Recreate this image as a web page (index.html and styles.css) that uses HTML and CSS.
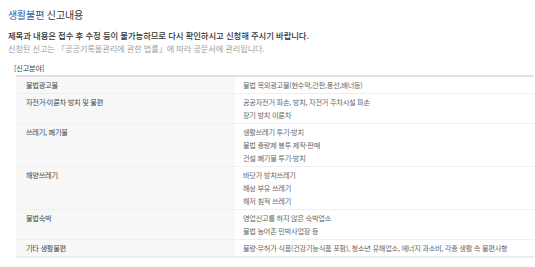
FILE: index.html
```html
<!DOCTYPE html>
<html lang="ko">
<head>
<meta charset="utf-8">
<link rel="stylesheet" href="styles.css">
</head>
<body>
<div class="page">
  <h2 class="title"><span class="accent">생활불편</span> 신고내용</h2>
  <p class="notice">제목과 내용은 접수 후 수정 등이 불가능하므로 다시 확인하시고 신청해 주시기 바랍니다.</p>
  <p class="sub">신청된 신고는 「공공기록물관리에 관한 법률」에 따라 공문서에 관리됩니다.</p>
  <div class="label">[신고분야]</div>
  <table class="fields">
    <tr><th>불법광고물</th><td>불법 옥외광고물(현수막,간판,풍선,배너등)</td></tr>
    <tr><th>자전거·이륜차 방치 및 불편</th><td>공공자전거 파손, 방치, 자전거 주차시설 파손<br>장기 방치 이륜차</td></tr>
    <tr><th>쓰레기, 폐기물</th><td>생활쓰레기 투기·방치<br>불법 종량제 봉투 제작·판매<br>건설 폐기물 투기·방치</td></tr>
    <tr><th>해양쓰레기</th><td>바닷가 방치쓰레기<br>해상 부유 쓰레기<br>해저 침적 쓰레기</td></tr>
    <tr><th>불법숙박</th><td>영업신고를 하지 않은 숙박업소<br>불법 농어촌 민박사업장 등</td></tr>
    <tr><th>기타 생활불편</th><td>불량·무허가 식품(건강기능식품 포함), 청소년 유해업소, 에너지 과소비, 각종 생활 속 불편사항</td></tr>
  </table>
</div>
</body>
</html>
```
FILE: styles.css
```css
html, body {
  margin: 0;
  padding: 0;
  background: #fff;
}
body {
  font-family: "Noto Sans CJK KR", "Noto Sans", sans-serif;
  color: #333;
}
.page {
  padding: 8px 1px 0 8px;
}
.title {
  margin: 0;
  font-size: 10px;
  line-height: 14px;
  font-weight: 400;
  letter-spacing: -0.15px;
  color: #333;
}
.accent {
  color: #2c5aa8;
}
.notice {
  margin: 6.5px 0 0;
  font-size: 8.4px;
  line-height: 13px;
  font-weight: 500;
  letter-spacing: -0.1px;
  color: #333;
}
.sub {
  margin: 0;
  font-size: 8.2px;
  line-height: 13px;
  letter-spacing: -0.1px;
  color: #a0a0a0;
}
.label {
  margin: 7.5px 0 0 6px;
  font-size: 7.2px;
  line-height: 12px;
  letter-spacing: -0.2px;
  color: #444;
}
.fields {
  margin: 1px 0 0 8px;
  width: calc(100% - 8px);
  border-collapse: collapse;
  border-top: 2px solid #e0e0e0;
  border-bottom: 2px solid #ececec;
  font-size: 7.2px;
  line-height: 13px;
  letter-spacing: -0.25px;
}
.fields th,
.fields td {
  vertical-align: top;
  text-align: left;
  font-weight: 400;
  padding: 2px 8px 1px 8px;
  border-bottom: 1px solid #efefef;
}
.fields th {
  width: 201px;
  padding-left: 10px;
  background: #f7f7f7;
  color: #444;
}
.fields td {
  color: #666;
}
```
